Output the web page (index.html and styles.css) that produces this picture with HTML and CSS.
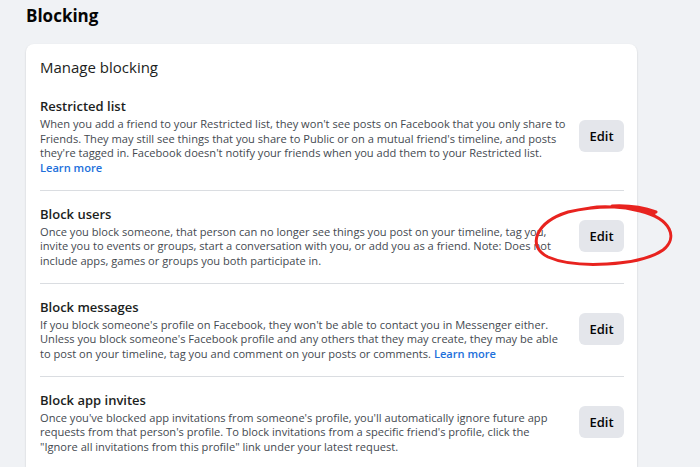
FILE: index.html
```html
<!DOCTYPE html>
<html lang="en">
<head>
<meta charset="utf-8">
<title>Blocking</title>
<link rel="stylesheet" href="styles.css">
</head>
<body>
<div class="page">
  <h1 class="page-title">Blocking</h1>
  <div class="card">
    <h2 class="card-title">Manage blocking</h2>

    <div class="section">
      <div class="section-text">
        <div class="section-title">Restricted list</div>
        <div class="section-desc">When you add a friend to your Restricted list, they won't see posts on Facebook that you only share to<br>Friends. They may still see things that you share to Public or on a mutual friend's timeline, and posts<br>they're tagged in. Facebook doesn't notify your friends when you add them to your Restricted list.<br><a class="link" href="#">Learn more</a></div>
      </div>
      <button class="edit-btn">Edit</button>
    </div>

    <div class="section">
      <div class="section-text">
        <div class="section-title">Block users</div>
        <div class="section-desc">Once you block someone, that person can no longer see things you post on your timeline, tag you,<br>invite you to events or groups, start a conversation with you, or add you as a friend. Note: Does not<br>include apps, games or groups you both participate in.</div>
      </div>
      <button class="edit-btn">Edit</button>
    </div>

    <div class="section">
      <div class="section-text">
        <div class="section-title">Block messages</div>
        <div class="section-desc">If you block someone's profile on Facebook, they won't be able to contact you in Messenger either.<br>Unless you block someone's Facebook profile and any others that they may create, they may be able<br>to post on your timeline, tag you and comment on your posts or comments. <a class="link" href="#">Learn more</a></div>
      </div>
      <button class="edit-btn">Edit</button>
    </div>

    <div class="section">
      <div class="section-text">
        <div class="section-title">Block app invites</div>
        <div class="section-desc">Once you've blocked app invitations from someone's profile, you'll automatically ignore future app<br>requests from that person's profile. To block invitations from a specific friend's profile, click the<br>"Ignore all invitations from this profile" link under your latest request.</div>
      </div>
      <button class="edit-btn">Edit</button>
    </div>
  </div>
</div>
<svg class="annotation" width="700" height="467" viewBox="0 0 700 467" xmlns="http://www.w3.org/2000/svg">
  <path d="M654 214 C 640 206, 600 204, 568 212 C 536 222, 526 246, 548 257 C 575 269, 640 266, 663 250 C 678 238, 672 219, 640 211 C 620 206, 600 206, 590 208 M 612 206 C 630 205, 645 208, 656 212" fill="none" stroke="#e8231f" stroke-width="3" stroke-linecap="round"/>
</svg>
</body>
</html>
```
FILE: styles.css
```css
html, body {
  margin: 0;
  padding: 0;
}
body {
  background: #f0f2f5;
  font-family: "Open Sans", "Noto Sans", "Liberation Sans", sans-serif;
  color: #050505;
  width: 700px;
  height: 467px;
  overflow: hidden;
  position: relative;
}
.page {
  padding: 0 26px;
}
.page-title {
  margin: 5px 0 17px;
  font-size: 17px;
  line-height: 22px;
  font-weight: 700;
  color: #050505;
}
.card {
  width: 611px;
  box-sizing: border-box;
  background: #fff;
  border-radius: 8px 8px 0 0;
  box-shadow: 0 1px 2px rgba(0, 0, 0, 0.18);
  padding: 12px 13px 0 14px;
  height: 423px;
  overflow: hidden;
}
.card-title {
  margin: 0 0 5px;
  font-size: 15px;
  line-height: 22px;
  font-weight: 500;
  color: #1c1e21;
}
.section {
  display: flex;
  align-items: center;
  gap: 10px;
  padding: 14px 0 14.5px;
  border-bottom: 1px solid #dadde1;
}
.section:last-child {
  border-bottom: none;
}
.section-text {
  flex: 1;
  min-width: 0;
}
.section-title {
  font-size: 13px;
  line-height: 18px;
  font-weight: 600;
  color: #1c1e21;
}
.section-desc {
  margin-top: 2px;
  font-size: 11.1px;
  line-height: 14.5px;
  color: #444950;
  white-space: nowrap;
}
.link {
  color: #216fdb;
  font-weight: 600;
  text-decoration: none;
}
.edit-btn {
  flex: none;
  width: 45px;
  height: 32px;
  border: none;
  border-radius: 6px;
  background: #e4e6eb;
  font-family: inherit;
  font-size: 13px;
  font-weight: 600;
  color: #050505;
  padding: 0;
}
.annotation {
  position: absolute;
  top: 0;
  left: 0;
  pointer-events: none;
}
```
